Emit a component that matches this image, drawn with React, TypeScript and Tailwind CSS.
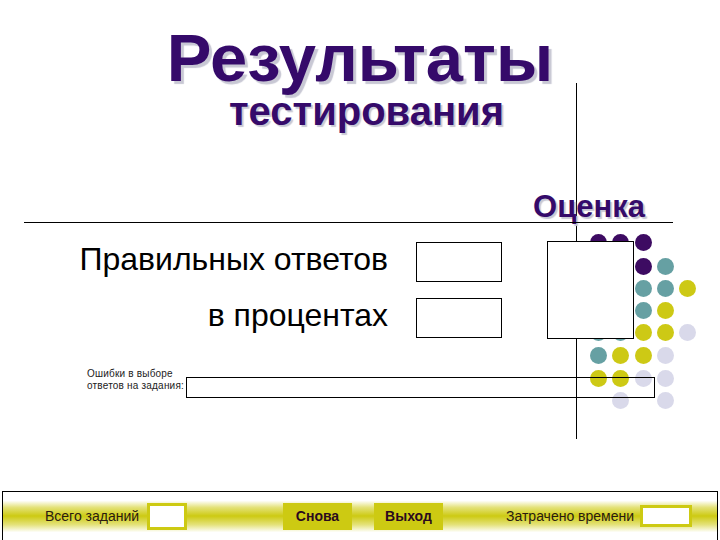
import React from "react";

const P = "#3d0b62";
const T = "#66a0a3";
const Y = "#cdc915";
const L = "#d9d9ea";

const dots: [number, number, string][] = [
  [598, 242, P], [620, 242, P], [643, 242, P],
  [598, 266, P], [620, 266, P], [643, 266, P], [665, 266, T],
  [598, 288, T], [620, 288, T], [643, 288, T], [665, 288, T], [687, 288, Y],
  [598, 310, T], [620, 310, T], [643, 310, T], [665, 310, Y],
  [598, 332, T], [620, 332, T], [643, 332, Y], [665, 332, Y], [687, 332, L],
  [598, 355, T], [620, 355, Y], [643, 355, Y], [665, 355, L],
  [598, 378, Y], [620, 378, Y], [643, 378, L], [665, 378, L],
  [620, 400, L], [665, 400, L],
];

export default function App() {
  return (
    <div
      className="relative flex h-[540px] w-[720px] flex-col overflow-hidden bg-white text-black"
      style={{ fontFamily: '"Liberation Sans", Arial, sans-serif' }}
    >
      {/* decorative dots */}
      <div className="pointer-events-none absolute inset-0">
        {dots.map(([x, y, c], i) => (
          <div
            key={i}
            className="absolute h-[17px] w-[17px] rounded-full"
            style={{ left: x - 8.5, top: y - 8.5, backgroundColor: c }}
          />
        ))}
      </div>

      {/* vertical line */}
      <div className="absolute left-[576px] top-[83px] h-[356px] w-px bg-black" />

      {/* grade box */}
      <div className="absolute left-[547px] top-[241px] h-[98px] w-[87px] border border-black bg-white" />

      {/* Title */}
      <div className="relative mt-[26px] h-[63px] text-center text-[67px] font-bold leading-[63px] text-[#350a6a] [text-shadow:3px_3px_1px_#c8c8d4]">
        Результаты
      </div>
      <div className="relative mt-[3px] h-[38px] pl-[13px] text-center text-[40px] font-bold leading-[38px] text-[#350a6a] [text-shadow:2px_2px_1px_#c8c8d4]">
        тестирования
      </div>

      {/* Оценка */}
      <div className="relative mt-[62px] flex h-[30px] justify-end pr-[75px] text-[31px] font-bold leading-[30px] text-[#350a6a] [text-shadow:2px_2px_1px_#c8c8d4]">
        Оценка
      </div>
      <div className="relative ml-[24px] h-px w-[649px] bg-black" />

      {/* Rows */}
      <div className="mt-[19px] flex items-start">
        <div className="w-[388px] whitespace-nowrap text-right text-[32px] leading-[34px]">
          Правильных ответов
        </div>
        <div className="ml-[28px] h-[40px] w-[86px] border border-black" />
      </div>
      <div className="mt-[16px] flex items-start">
        <div className="w-[388px] whitespace-nowrap text-right text-[32px] leading-[34px]">
          в процентах
        </div>
        <div className="ml-[28px] h-[40px] w-[86px] border border-black" />
      </div>

      {/* errors */}
      <div className="mt-[30px] flex items-start pl-[87px]">
        <div className="w-[99px] whitespace-nowrap text-[10px] leading-[12px] tracking-[0.2px] text-[#222]">
          <div>Ошибки в выборе</div>
          <div>ответов на задания:</div>
        </div>
        <div className="relative mt-[9px] h-[21px] w-[469px] border border-black" />
      </div>

      {/* footer */}
      <div className="mx-[2px] mt-auto flex h-[49px] items-center border-l border-r border-t border-black bg-[linear-gradient(to_bottom,#ffffff_0%,#ffffff_18%,#e4e27a_32%,#cdca12_50%,#e4e27a_68%,#ffffff_84%,#ffffff_100%)] text-[14px]">
        <div className="ml-[42px] w-[98px] whitespace-nowrap text-[#2a1a10]">Всего заданий</div>
        <div className="ml-[4px] h-[27px] w-[40px] border-[3px] border-[#cdca12] bg-white" />
        <div className="ml-[96px] flex h-[27px] w-[69px] items-center justify-center bg-[#cdca12] font-bold text-[#2b0a1e]">
          Снова
        </div>
        <div className="ml-[22px] flex h-[27px] w-[69px] items-center justify-center bg-[#cdca12] font-bold text-[#2b0a1e]">
          Выход
        </div>
        <div className="ml-[63px] w-[131px] whitespace-nowrap text-[#2a1a10]">Затрачено времени</div>
        <div className="ml-[3px] h-[22px] w-[52px] border-[3px] border-[#cdca12] bg-white" />
      </div>
    </div>
  );
}
